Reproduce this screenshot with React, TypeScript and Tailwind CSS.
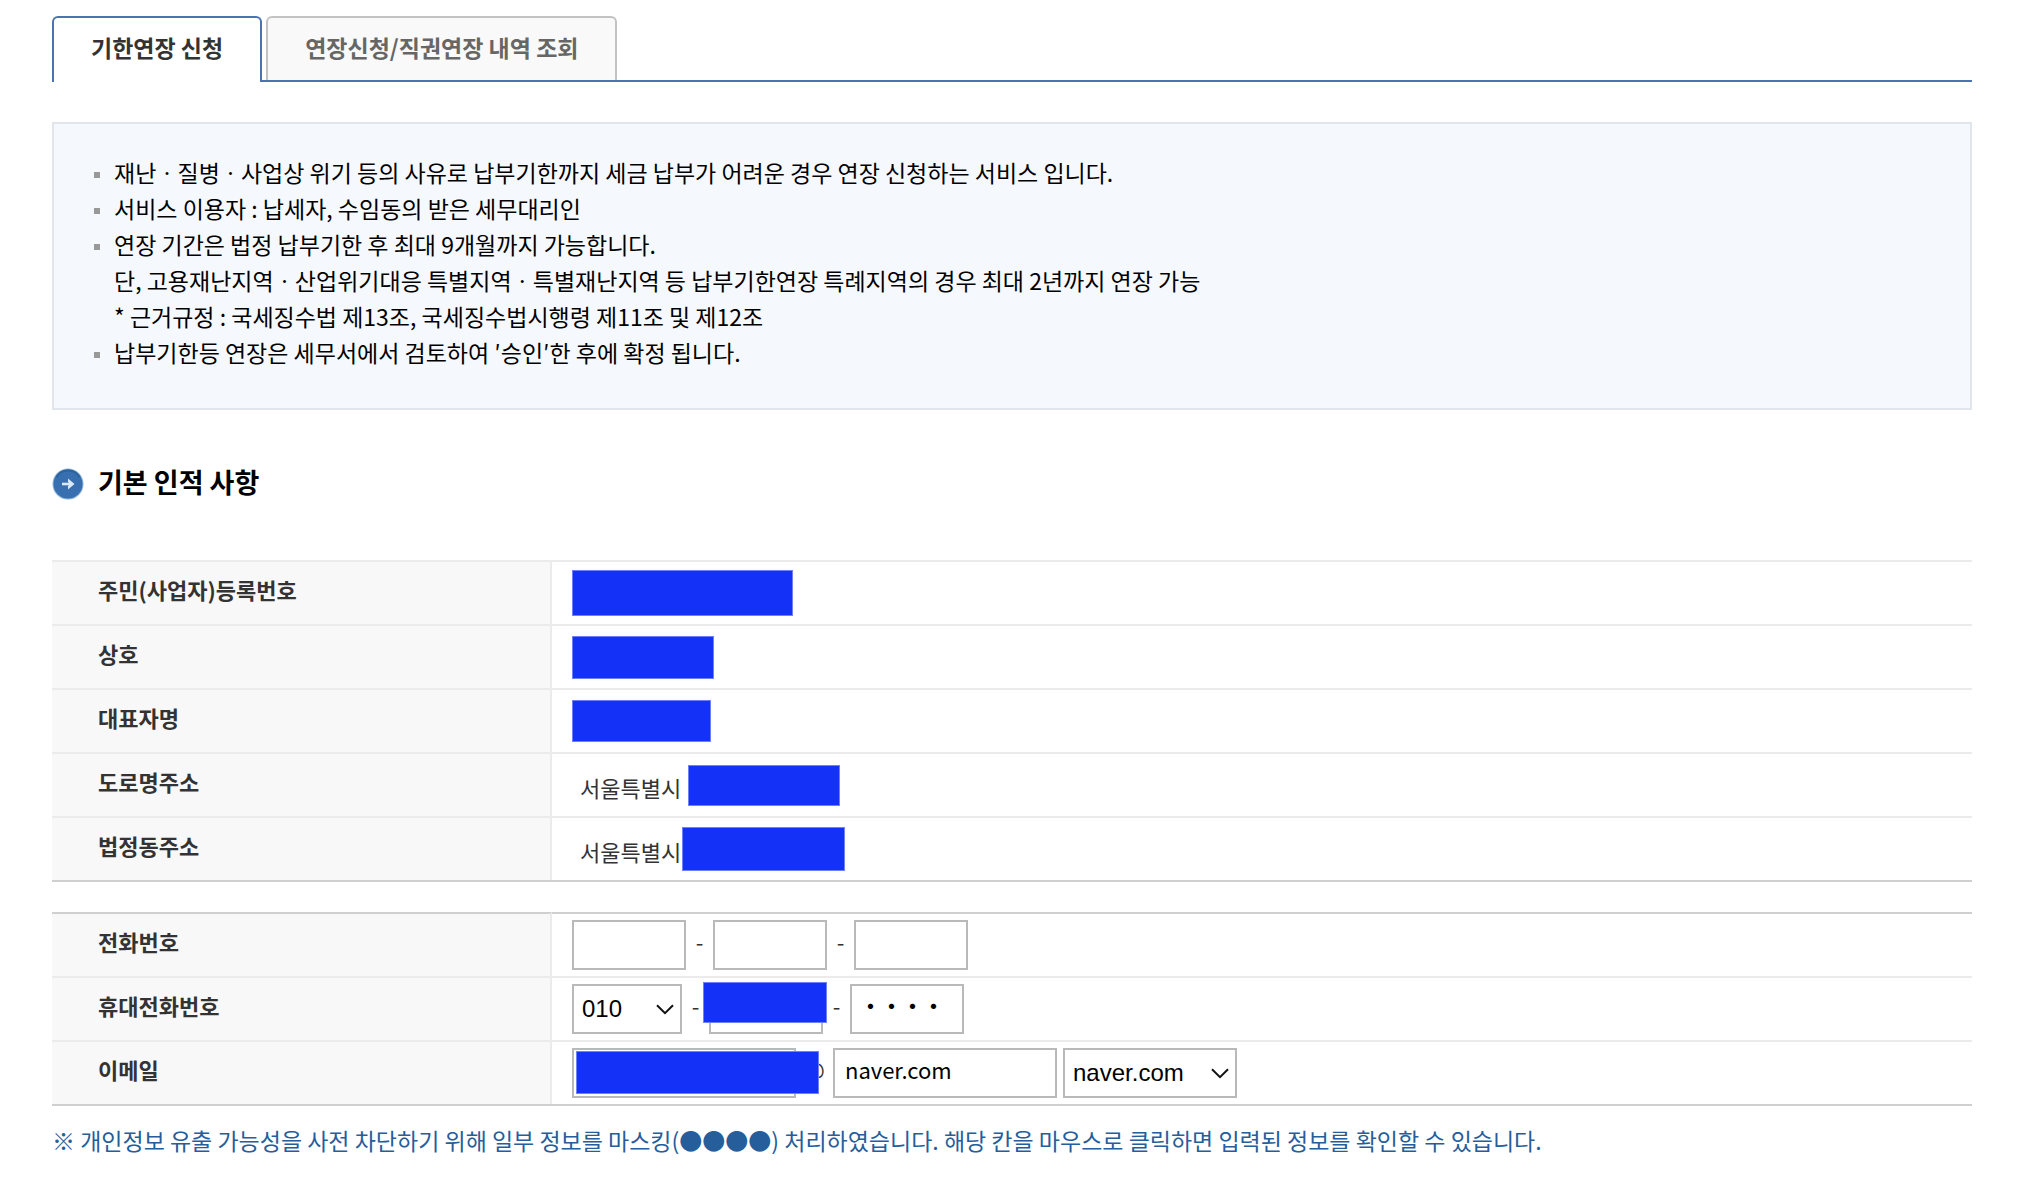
import React, { useState } from 'react';

interface RowProps {
  label: string;
  htmlFor?: string;
  children: React.ReactNode;
}

const TABS = ['기한연장 신청', '연장신청/직권연장 내역 조회'];

const NOTICES: string[][] = [
  ['재난ㆍ질병ㆍ사업상 위기 등의 사유로 납부기한까지 세금 납부가 어려운 경우 연장 신청하는 서비스 입니다.'],
  ['서비스 이용자 : 납세자, 수임동의 받은 세무대리인'],
  [
    '연장 기간은 법정 납부기한 후 최대 9개월까지 가능합니다.',
    '단, 고용재난지역ㆍ산업위기대응 특별지역ㆍ특별재난지역 등 납부기한연장 특례지역의 경우 최대 2년까지 연장 가능',
    '* 근거규정 : 국세징수법 제13조, 국세징수법시행령 제11조 및 제12조',
  ],
  ['납부기한등 연장은 세무서에서 검토하여 ′승인′한 후에 확정 됩니다.'],
];

const FIELD = 'h-[50px] border-2 border-[#b9b9b9] bg-white text-black outline-none';

// Solid block that hides a personal value
const Redacted: React.FC<{ className: string }> = ({ className }) => (
  <span className={`block bg-[#1431f8] border border-[#6f80fb] ${className}`} />
);

const Row: React.FC<RowProps> = ({ label, htmlFor, children }) => (
  <tr className="h-16">
    <th scope="row" className="w-[500px] border-t-2 border-r-2 border-[#ebebeb] bg-[#f8f8f8] pl-[46px] pb-2 text-left font-bold">
      <label htmlFor={htmlFor}>{label}</label>
    </th>
    <td className="border-t-2 border-[#ebebeb] pl-5">
      <div className="flex items-center">{children}</div>
    </td>
  </tr>
);

const Separator: React.FC<{ wide?: boolean; children: React.ReactNode }> = ({ wide, children }) => (
  <span className={`shrink-0 text-center pb-2 ${wide ? 'w-[37px]' : 'w-[27px]'}`}>{children}</span>
);

const Chevron = () => (
  <svg className="pointer-events-none absolute right-2 top-5 h-[11px] w-[18px]" viewBox="0 0 18 11" fill="none" stroke="#111" strokeWidth="2">
    <path d="M1 1.2 L9 9.2 L17 1.2" />
  </svg>
);

const Select: React.FC<{ label: string; options: string[]; className: string }> = ({ label, options, className }) => (
  <div className={`relative ${className}`}>
    <select
      aria-label={label}
      className={`${FIELD} w-full appearance-none pl-2 pr-8 font-['Liberation_Sans','Noto_Sans_CJK_KR',sans-serif] text-2xl leading-none`}
    >
      {options.map((o) => (
        <option key={o}>{o}</option>
      ))}
    </select>
    <Chevron />
  </div>
);

const App = () => {
  const [tab, setTab] = useState(0);

  return (
    <main className="min-h-screen bg-white pt-4 pb-6 pl-[52px] pr-[54px] font-['Noto_Sans_CJK_KR',sans-serif] text-[23px] leading-9 text-[#333]">
      <div role="tablist" className="flex gap-1 border-b-2 border-[#4a73b0]">
        {TABS.map((name, i) => (
          <button
            key={name}
            role="tab"
            aria-selected={tab === i}
            onClick={() => setTab(i)}
            className={
              tab === i
                ? '-mb-0.5 h-[66px] rounded-t-md border-2 border-b-0 border-[#4a73b0] bg-white px-[37px] pb-1.5 font-bold text-[#333]'
                : 'h-16 rounded-t-md border-2 border-b-0 border-[#c3c3c3] bg-[#f9f9f9] px-[37px] pb-1 font-bold text-[#666]'
            }
          >
            {name}
          </button>
        ))}
      </div>

      <section className="mt-10 border-2 border-[#e1e6ed] bg-[#f5f8fd] px-10 pt-[30px] pb-[38px]">
        <ul className="text-black">
          {NOTICES.map((lines) => (
            <li key={lines[0]} className="flex gap-[14px]">
              <span className="mt-[18px] h-[6px] w-[6px] shrink-0 bg-[#999]" />
              <div>
                {lines.map((line) => (
                  <p key={line}>{line}</p>
                ))}
              </div>
            </li>
          ))}
        </ul>
      </section>

      <h2 className="mt-[54px] flex items-center gap-[14px] text-[27px] font-bold leading-9 text-black">
        <svg className="h-8 w-8" viewBox="0 0 32 32">
          <circle cx="16" cy="16" r="15.5" fill="#8db2d8" />
          <circle cx="16" cy="16" r="14.5" fill="#386fb0" />
          <path d="M4.5 9a13.5 13.5 0 0 1 23 0" fill="none" stroke="#2c629c" strokeWidth="2" />
          <path d="M10 16h9" fill="none" stroke="#dce9f7" strokeWidth="2.6" />
          <path d="M16 10.5l6.500 5.500-6.500 5.500v-3.500l2-2-2-2z" fill="#dce9f7" />
        </svg>
        <span className="pb-1">기본 인적 사항</span>
      </h2>

      <table className="mt-14 w-full border-separate border-spacing-0 border-b-2 border-[#d0d0d0] text-[22px]">
        <tbody>
          <Row label="주민(사업자)등록번호">
            <Redacted className="h-[46px] w-[221px]" />
          </Row>
          <Row label="상호">
            <Redacted className="h-[43px] w-[142px]" />
          </Row>
          <Row label="대표자명">
            <Redacted className="h-[42px] w-[139px]" />
          </Row>
          <Row label="도로명주소">
            <span className="ml-2 w-[108px] pt-1">서울특별시</span>
            <Redacted className="h-[41px] w-[152px]" />
          </Row>
          <Row label="법정동주소">
            <span className="ml-2 w-[102px] pt-1">서울특별시</span>
            <Redacted className="h-11 w-[163px]" />
          </Row>
        </tbody>
      </table>

      <table className="mt-[30px] w-full border-separate border-spacing-0 border-b-2 border-[#d0d0d0] text-[22px] [&_tr:first-child>*]:border-t-[#d0d0d0]">
        <tbody>
          <Row label="전화번호" htmlFor="tel1">
            <input id="tel1" className={`${FIELD} w-[114px] px-3`} />
            <Separator>-</Separator>
            <input aria-label="전화번호 가운데 자리" className={`${FIELD} w-[114px] px-3`} />
            <Separator>-</Separator>
            <input aria-label="전화번호 끝자리" className={`${FIELD} w-[114px] px-3`} />
          </Row>
          <Row label="휴대전화번호">
            <Select label="휴대전화번호 앞자리" options={['010', '011', '016', '017', '018', '019']} className="w-[110px]" />
            <Separator>-</Separator>
            <div className="relative">
              <input aria-label="휴대전화번호 가운데 자리" className={`${FIELD} block w-[114px] px-3`} />
              <Redacted className="absolute -left-[6px] -top-0.5 h-[41px] w-[124px]" />
            </div>
            <Separator>-</Separator>
            <input aria-label="휴대전화번호 끝자리" defaultValue="・・・・" className={`${FIELD} w-[114px] px-2 pb-2 text-[21px] font-bold`} />
          </Row>
          <Row label="이메일" htmlFor="email">
            <div className="relative flex items-center">
              <input id="email" className={`${FIELD} w-[224px] px-3`} />
              <Separator wide>@</Separator>
              <Redacted className="absolute left-1 top-[3px] h-[43px] w-[243px]" />
            </div>
            <input aria-label="이메일 도메인" defaultValue="naver.com" className={`${FIELD} w-[224px] px-[10px] pb-2`} />
            <Select label="이메일 도메인 선택" options={['naver.com', 'gmail.com', 'daum.net', '직접입력']} className="ml-[6px] w-[174px]" />
          </Row>
        </tbody>
      </table>

      <p className="mt-4 text-[#265d9b]">
        ※ 개인정보 유출 가능성을 사전 차단하기 위해 일부 정보를 마스킹(●●●●) 처리하였습니다. 해당 칸을 마우스로 클릭하면 입력된 정보를 확인할 수 있습니다.
      </p>
    </main>
  );
};

export default App;
